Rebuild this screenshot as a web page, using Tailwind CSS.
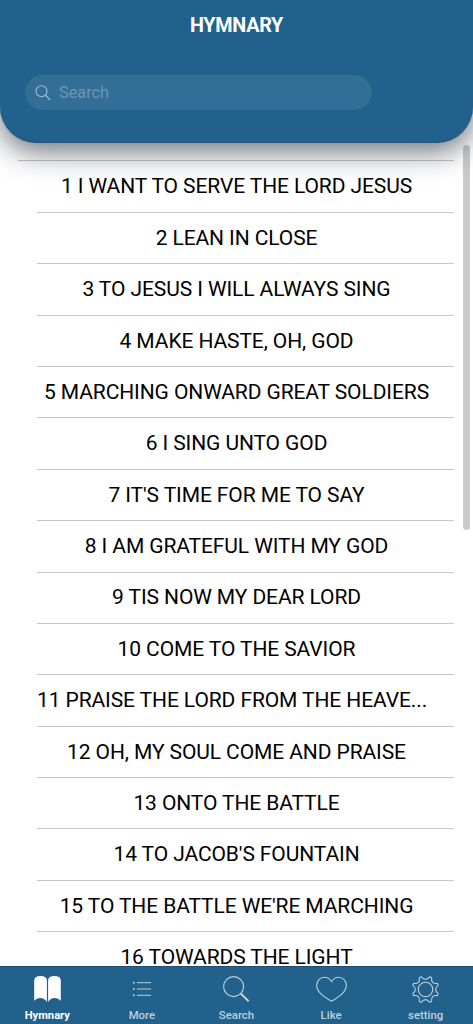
<!DOCTYPE html>
<html lang="en">
<head>
  <meta charset="UTF-8">
  <meta name="viewport" content="width=device-width, initial-scale=1">
  <title>Hymnary</title>
  <script src="https://cdn.jsdelivr.net/npm/@tailwindcss/browser@4"></script>
</head>
<body class="h-screen overflow-hidden bg-white flex flex-col font-['Roboto',sans-serif] text-black">
  <header class="relative z-10 shrink-0 h-[143px] bg-[#22618c] rounded-b-[36px] border-b border-[#1d5479] shadow-[0_8px_30px_rgba(0,15,32,0.6)]">
    <h1 class="pt-3 text-center text-white text-[19.8px] leading-[28px] tracking-[-0.3px] font-bold">HYMNARY</h1>
    <div class="mt-[35px] ml-[25px] w-[347px] h-[34.5px] rounded-full bg-[#326e96] flex items-center">
      <svg class="ml-[10px] mt-px w-4 h-4" viewBox="0 0 16 16" fill="none" stroke="#a5c0d2" stroke-width="1.1">
        <circle cx="6.5" cy="6.2" r="5.5" />
        <path d="M10.5 10.2L15.2 15" />
      </svg>
      <input id="search" class="ml-2 pt-px w-60 bg-transparent text-[16.3px] text-white placeholder:text-[#6f98b4] outline-none" placeholder="Search" />
    </div>
  </header>

  <main class="relative flex-1 min-h-0 overflow-hidden">
    <div class="mt-[17px] ml-[18px] mr-[19px] h-[1.4px] bg-[#c8c8cc]"></div>
    <ul id="hymn-list" class="ml-[37px] mr-[19px]"></ul>
    <div class="absolute right-[3px] top-[2px] w-[7px] h-[385px] rounded-full bg-[#cacaca]"></div>
  </main>

  <nav class="relative z-10 shrink-0 h-[58px] bg-[#22618c] border-t border-[#1d4e70] grid grid-cols-5 text-[11.4px] leading-[13px] font-medium text-[#bdd0dd]">
    <a class="flex flex-col items-center text-white">
      <svg class="mt-[9px] w-[27px] h-[27px]" viewBox="0 0 27 27" fill="currentColor">
        <path d="M.2 25V4.5Q.2 0 6.5 0Q12.9 0 12.9 4.5V26Q10.5 22 6.5 22Q2.5 22 .2 25Z" />
        <path d="M26.8 25V4.5Q26.8 0 20.5 0Q14.1 0 14.1 4.5V26Q16.5 22 20.5 22Q24.5 22 26.8 25Z" />
      </svg>
      <span class="mt-[6px] text-[11.2px] font-bold">Hymnary</span>
    </a>
    <a class="flex flex-col items-center">
      <svg class="mt-[9px] w-[27px] h-[27px]" viewBox="0 0 27 27" fill="currentColor">
        <circle cx="5.8" cy="6.7" r="1" /><rect x="9" y="6.2" width="14" height="1" />
        <circle cx="5.8" cy="13" r="1" /><rect x="9" y="12.5" width="14" height="1" />
        <circle cx="5.8" cy="19.3" r="1" /><rect x="9" y="18.8" width="14" height="1" />
      </svg>
      <span class="mt-[6px]">More</span>
    </a>
    <a class="flex flex-col items-center">
      <svg class="mt-[9px] w-[27px] h-[27px]" viewBox="0 0 27 27" fill="none" stroke="currentColor">
        <circle cx="10.6" cy="10.6" r="10" stroke-width="1.1" />
        <path d="M17.5 17.2L25.6 25.2" stroke-width="2" />
      </svg>
      <span class="mt-[6px]">Search</span>
    </a>
    <a class="flex flex-col items-center">
      <svg class="mt-[9px] w-[31px] h-[27px]" viewBox="0 0 31 27" fill="none" stroke="currentColor" stroke-width="1.1" stroke-linejoin="round">
        <path d="M15.5 5.7C13.8 2.7 11.5 1.2 8.5 1.2C4 1.2 .7 4.8 .7 9.2C.7 15.5 6.5 20 15.5 25.3C24.5 20 30.3 15.5 30.3 9.2C30.3 4.8 27 1.2 22.5 1.2C19.5 1.2 17.2 2.7 15.5 5.7Z" />
      </svg>
      <span class="mt-[6px]">Like</span>
    </a>
    <a class="flex flex-col items-center">
      <svg class="mt-[9px] w-[27px] h-[27px]" viewBox="0 0 27 27" fill="none" stroke="currentColor" stroke-width="1.1" stroke-linejoin="round">
        <circle cx="13.5" cy="13.5" r="7.2" />
        <path d="M9.4 .8Q13.5 6 17.6 .8L19.6 1.6Q18.8 8.2 25.4 7.4L26.2 9.4Q21 13.5 26.2 17.6L25.4 19.6Q18.8 18.8 19.6 25.4L17.6 26.2Q13.5 21 9.4 26.2L7.4 25.4Q8.2 18.8 1.6 19.6L.8 17.6Q6 13.5 .8 9.4L1.6 7.4Q8.2 8.2 7.4 1.6Z" />
      </svg>
      <span class="mt-[6px]">setting</span>
    </a>
  </nav>

  <script>
    const hymns = [
      "I WANT TO SERVE THE LORD JESUS",
      "LEAN IN CLOSE",
      "TO JESUS I WILL ALWAYS SING",
      "MAKE HASTE, OH, GOD",
      "MARCHING ONWARD GREAT SOLDIERS",
      "I SING UNTO GOD",
      "IT'S TIME FOR ME TO SAY",
      "I AM GRATEFUL WITH MY GOD",
      "TIS NOW MY DEAR LORD",
      "COME TO THE SAVIOR",
      "PRAISE THE LORD FROM THE HEAVE...",
      "OH, MY SOUL COME AND PRAISE",
      "ONTO THE BATTLE",
      "TO JACOB'S FOUNTAIN",
      "TO THE BATTLE WE'RE MARCHING",
      "TOWARDS THE LIGHT"
    ];

    document.getElementById('hymn-list').innerHTML = hymns.map((title, i) => `
      <li class="h-[51.4px] border-b border-[#c8c8cc] pt-px pr-[18px] flex items-center ${i === 10 ? 'justify-start' : 'justify-center'} text-[21px] tracking-[-0.1px] whitespace-nowrap">${i + 1} ${title}</li>
    `).join('');
  </script>
</body>
</html>
